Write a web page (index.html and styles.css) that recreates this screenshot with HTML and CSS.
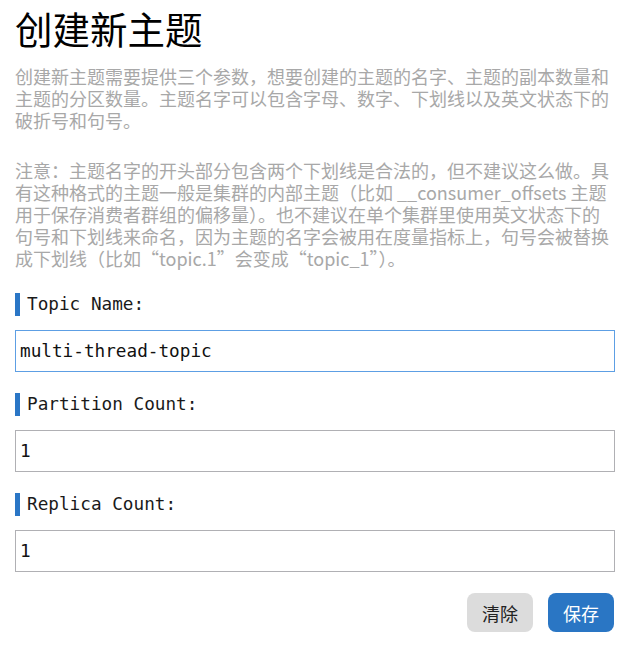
FILE: index.html
```html
<!DOCTYPE html>
<html lang="zh-CN">
<head>
<meta charset="utf-8">
<title>创建新主题</title>
<link rel="stylesheet" href="styles.css">
</head>
<body>
<main class="page">
  <h1 class="title">创建新主题</h1>
  <p class="desc">创建新主题需要提供三个参数，想要创建的主题的名字、主题的副本数量和主题的分区数量。主题名字可以包含字母、数字、下划线以及英文状态下的破折号和句号。</p>
  <p class="desc note">注意：主题名字的开头部分包含两个下划线是合法的，但不建议这么做。具有这种格式的主题一般是集群的内部主题（比如 __consumer_offsets 主题用于保存消费者群组的偏移量）。也不建议在单个集群里使用英文状态下的句号和下划线来命名，因为主题的名字会被用在度量指标上，句号会被替换成下划线（比如“topic.1”会变成“topic_1”）。</p>
  <form class="form">
    <div class="field">
      <label class="label" for="name">Topic Name:</label>
      <input class="input focused" id="name" type="text" value="multi-thread-topic">
    </div>
    <div class="field">
      <label class="label" for="part">Partition Count:</label>
      <input class="input" id="part" type="text" value="1">
    </div>
    <div class="field">
      <label class="label" for="rep">Replica Count:</label>
      <input class="input" id="rep" type="text" value="1">
    </div>
    <div class="actions">
      <button type="button" class="btn btn-clear">清除</button>
      <button type="button" class="btn btn-save">保存</button>
    </div>
  </form>
</main>
</body>
</html>
```

FILE: styles.css
```css
html, body {
  margin: 0;
  padding: 0;
  background: #fff;
}

.page {
  padding: 5px 16px 0 15px;
  width: 600px;
  font-family: "Noto Sans CJK SC", "Noto Sans", sans-serif;
}

.title {
  margin: 0;
  font-size: 37.5px;
  line-height: 45px;
  font-weight: 400;
  color: #000;
}

.desc {
  margin: 15px 0 0 0;
  font-size: 18px;
  line-height: 22px;
  color: #a8a8a8;
}

.note {
  margin-top: 28px;
}

.form {
  display: flex;
  flex-direction: column;
  margin-top: 24px;
}

.field {
  display: flex;
  flex-direction: column;
  gap: 14px;
  margin-bottom: 21px;
}

.label {
  display: block;
  height: 23px;
  line-height: 23px;
  border-left: 5px solid #2a76c6;
  padding-left: 7px;
  font-family: "DejaVu Sans Mono", monospace;
  font-size: 17.7px;
  color: #1a1a1a;
}

.input {
  box-sizing: border-box;
  width: 600px;
  height: 42px;
  margin: 0;
  padding: 0 4px;
  border: 1px solid #b0b0b4;
  border-radius: 0;
  font-family: "DejaVu Sans Mono", monospace;
  font-size: 17.7px;
  color: #111;
  background: #fff;
  outline: none;
}

.input.focused {
  border-color: #5d9fe4;
}

.actions {
  display: flex;
  justify-content: flex-end;
  gap: 15px;
  padding-right: 1px;
}

.btn {
  width: 66px;
  height: 39px;
  border: none;
  border-radius: 8px;
  font-family: "Noto Sans CJK SC", sans-serif;
  font-size: 18px;
  padding: 0;
  cursor: pointer;
}

.btn-clear {
  background: #dcdcdc;
  color: #222;
}

.btn-save {
  background: #2a76c4;
  color: #fff;
}
```
